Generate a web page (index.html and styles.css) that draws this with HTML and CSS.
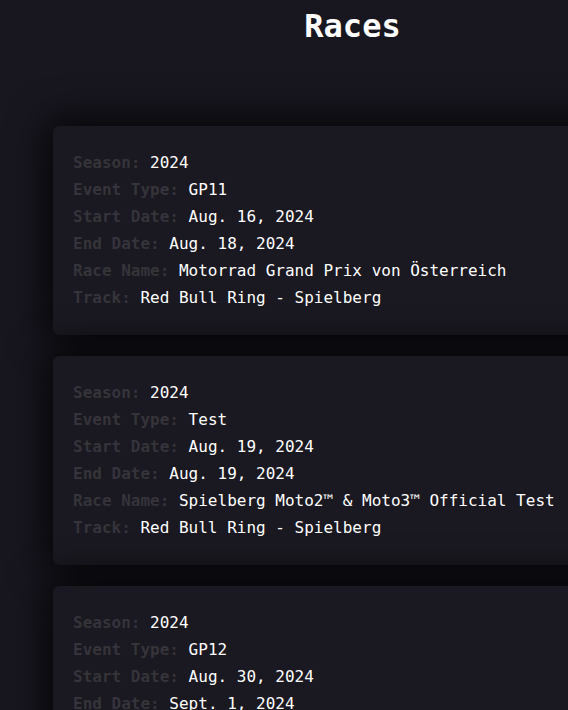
FILE: index.html
```html
<!DOCTYPE html>
<html lang="en">
<head>
<meta charset="utf-8">
<title>Races</title>
<link rel="stylesheet" href="styles.css">
</head>
<body>
<main class="page">
  <h1 class="title">Races</h1>
  <section class="list">
    <article class="card">
      <div class="row"><span class="label">Season:</span> <span class="value">2024</span></div>
      <div class="row"><span class="label">Event Type:</span> <span class="value">GP11</span></div>
      <div class="row"><span class="label">Start Date:</span> <span class="value">Aug. 16, 2024</span></div>
      <div class="row"><span class="label">End Date:</span> <span class="value">Aug. 18, 2024</span></div>
      <div class="row"><span class="label">Race Name:</span> <span class="value">Motorrad Grand Prix von Österreich</span></div>
      <div class="row"><span class="label">Track:</span> <span class="value">Red Bull Ring - Spielberg</span></div>
    </article>
    <article class="card">
      <div class="row"><span class="label">Season:</span> <span class="value">2024</span></div>
      <div class="row"><span class="label">Event Type:</span> <span class="value">Test</span></div>
      <div class="row"><span class="label">Start Date:</span> <span class="value">Aug. 19, 2024</span></div>
      <div class="row"><span class="label">End Date:</span> <span class="value">Aug. 19, 2024</span></div>
      <div class="row"><span class="label">Race Name:</span> <span class="value">Spielberg Moto2™ &amp; Moto3™ Official Test</span></div>
      <div class="row"><span class="label">Track:</span> <span class="value">Red Bull Ring - Spielberg</span></div>
    </article>
    <article class="card">
      <div class="row"><span class="label">Season:</span> <span class="value">2024</span></div>
      <div class="row"><span class="label">Event Type:</span> <span class="value">GP12</span></div>
      <div class="row"><span class="label">Start Date:</span> <span class="value">Aug. 30, 2024</span></div>
      <div class="row"><span class="label">End Date:</span> <span class="value">Sept. 1, 2024</span></div>
      <div class="row"><span class="label">Race Name:</span> <span class="value">Gran Premio GoPro de Aragón</span></div>
      <div class="row"><span class="label">Track:</span> <span class="value">MotorLand Aragón</span></div>
    </article>
  </section>
</main>
</body>
</html>
```

FILE: styles.css
```css
html, body {
  margin: 0;
  padding: 0;
  overflow: hidden;
  background: #18161f;
}

body {
  font-family: "DejaVu Sans Mono", "Liberation Mono", monospace;
  color: #ffffff;
}

.page {
  width: 599px;
  margin-left: 53px;
  padding-top: 8px;
}

.title {
  margin: 0;
  font-size: 32px;
  font-weight: bold;
  text-align: center;
  line-height: 37px;
  color: #ffffff;
}

.list {
  display: flex;
  flex-direction: column;
  gap: 21px;
  margin-top: 81px;
}

.card {
  background: #1a1820;
  border-radius: 6px;
  padding: 23px 20px 24px;
  box-shadow: 0 0 40px 4px rgba(0, 0, 0, 0.9);
}

.row {
  font-size: 16px;
  line-height: 27px;
  white-space: nowrap;
}

.label {
  font-weight: bold;
  color: #35343a;
}

.value {
  color: #ffffff;
}
```
